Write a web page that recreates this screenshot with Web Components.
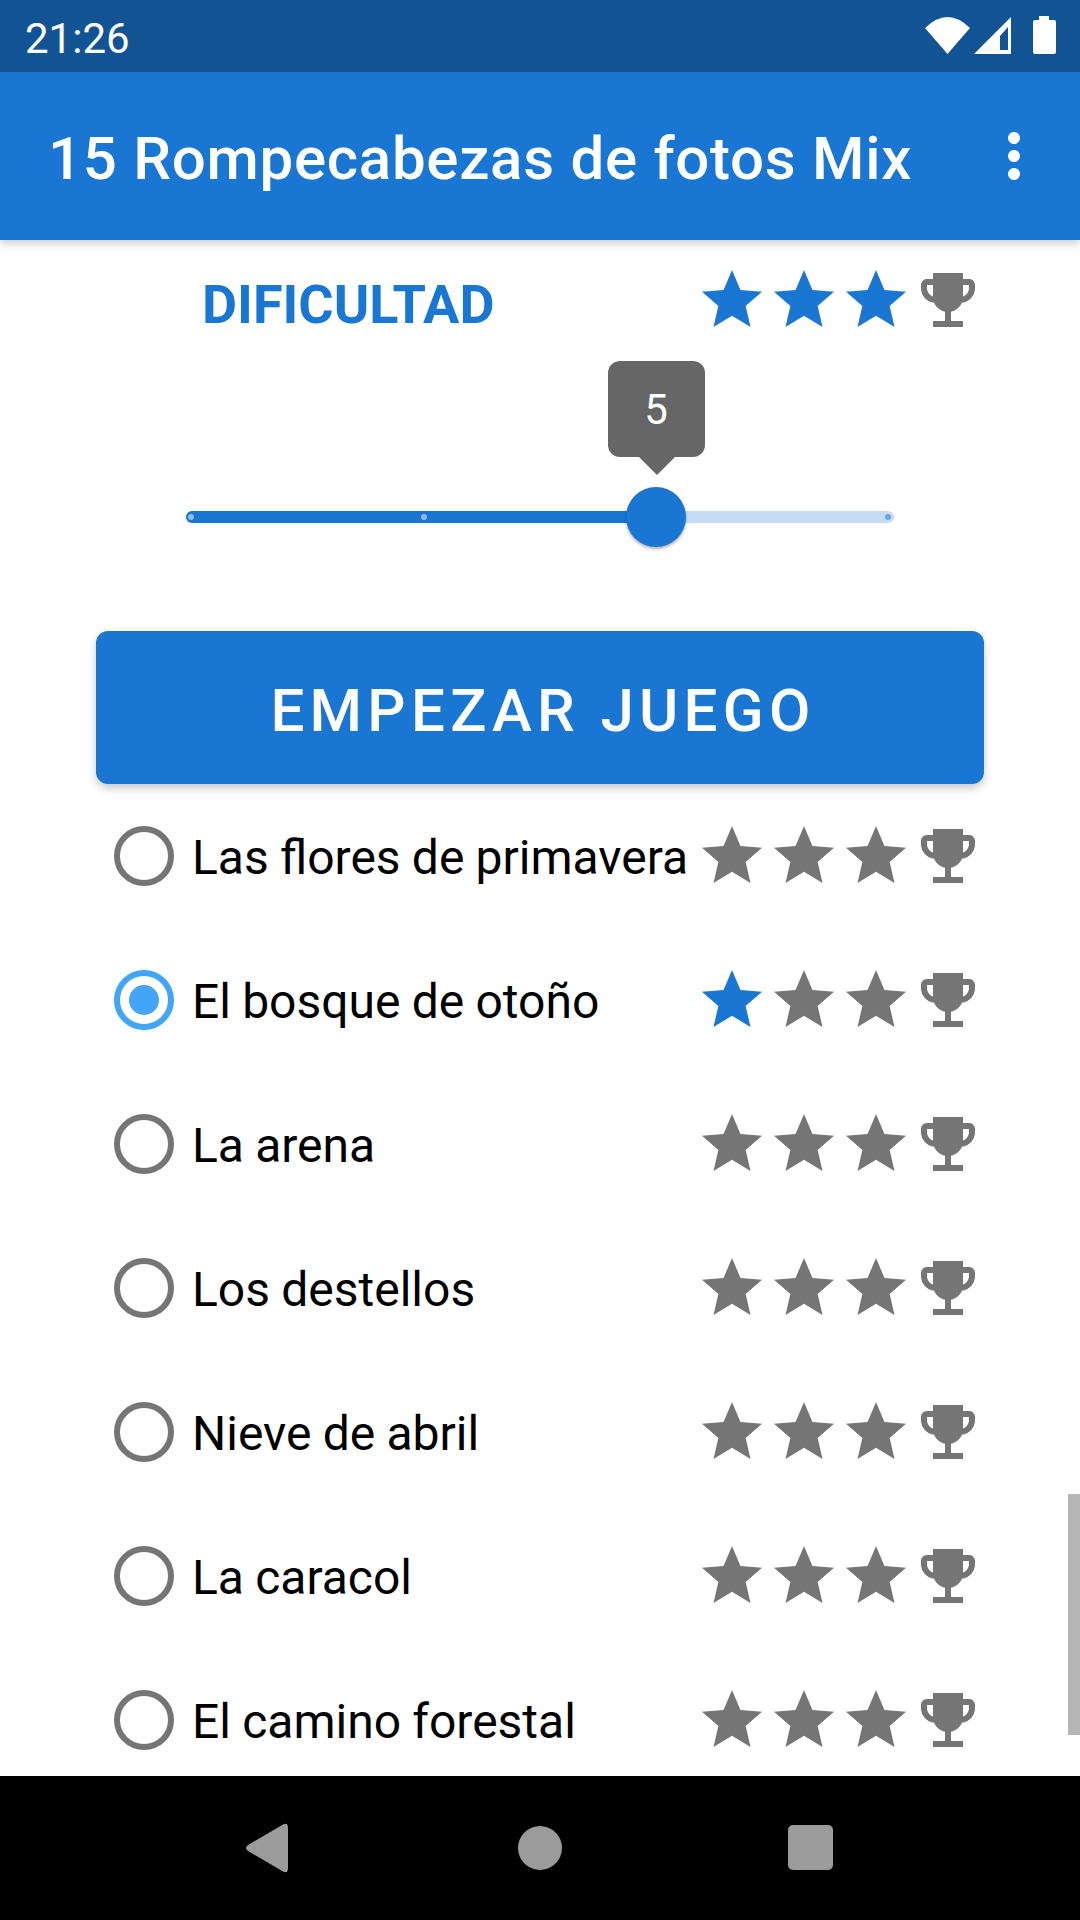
<!DOCTYPE html>
<html lang="es">
<head>
<meta charset="utf-8">
<title>15 Rompecabezas de fotos Mix</title>
<style>
    html, body { margin: 0; padding: 0; background: #FFFFFF; }
    body { font-family: Roboto, "Liberation Sans", sans-serif; }
</style>
</head>
<body>
<app-screen>
    <status-bar slot="top" time="21:26"></status-bar>
    <app-bar slot="top" title="15 Rompecabezas de fotos Mix"></app-bar>

    <difficulty-header filled="3"></difficulty-header>
    <level-slider></level-slider>
    <start-button>EMPEZAR JUEGO</start-button>
    <level-row>Las flores de primavera</level-row>
    <level-row checked filled="1">El bosque de otoño</level-row>
    <level-row>La arena</level-row>
    <level-row>Los destellos</level-row>
    <level-row>Nieve de abril</level-row>
    <level-row>La caracol</level-row>
    <level-row>El camino forestal</level-row>

    <nav-bar slot="bottom"></nav-bar>
</app-screen>

<script>
    const STAR = 'M12 17.27L18.18 21l-1.64-7.03L22 9.24l-7.19-.61L12 2 9.19 8.63 2 9.24l5.46 4.73L5.82 21z';
    const TROPHY = 'M19 5h-2V3H7v2H5c-1.1 0-2 .9-2 2v1c0 2.55 1.92 4.63 4.39 4.94.63 1.5 1.98 2.63 3.61 2.96V19H7v2h10v-2h-4v-3.1c1.63-.33 2.98-1.46 3.61-2.96C19.08 12.63 21 10.55 21 8V7c0-1.1-.9-2-2-2zM5 8V7h2v3.82C5.84 10.4 5 9.3 5 8zm14 0c0 1.3-.84 2.4-2 2.82V7h2v1z';

    class AppScreen extends HTMLElement {
        constructor() {
            super();
            this.attachShadow({ mode: 'open' }).innerHTML = `
                <style>
                    :host { display: flex; flex-direction: column; width: 1080px; height: 1920px; overflow: hidden; background: #FFFFFF; }
                    .top { position: relative; z-index: 2; flex: none; box-shadow: 0 3px 9px rgba(0,0,0,.22); }
                    .content { position: relative; flex: 1; min-height: 0; overflow: hidden; padding: 0 96px; }
                    .scrollbar { position: absolute; right: 0; top: 1254px; width: 12px; height: 241px; background: #B5B5B5; }
                    .bottom { flex: none; position: relative; z-index: 2; }
                </style>
                <div class="top"><slot name="top"></slot></div>
                <div class="content"><slot></slot><div class="scrollbar"></div></div>
                <div class="bottom"><slot name="bottom"></slot></div>`;
        }
    }

    class StatusBar extends HTMLElement {
        connectedCallback() {
            this.attachShadow({ mode: 'open' }).innerHTML = `
                <style>
                    :host { display: flex; align-items: center; height: 72px; padding-left: 25px; box-sizing: border-box; background: #125493; color: #FFFFFF; }
                    .time { margin-top: 5px; font: 400 42px/60px Roboto, sans-serif; }
                    svg { margin-left: auto; display: block; }
                </style>
                <span class="time">${this.getAttribute('time')}</span>
                <svg width="180" height="72" viewBox="900 0 180 72" fill="#FFFFFF">
                    <path d="M925 28Q947.500 6 970 28L947.500 54z"/>
                    <path fill-rule="evenodd" d="M1011 17V54H974zM1008 27L1000 36V50H1008z"/>
                    <path d="M1039 16h10v4h5q2 0 2 2v30q0 2-2 2h-19q-2 0-2-2V22q0-2 2-2h4z" />
                </svg>`;
        }
    }

    class AppBar extends HTMLElement {
        connectedCallback() {
            this.attachShadow({ mode: 'open' }).innerHTML = `
                <style>
                    :host { display: flex; align-items: center; height: 168px; padding: 0 30px 0 48px; box-sizing: border-box; background: #1976D2; color: #FFFFFF; }
                    .title { margin-top: 5px; font: 500 60px/80px Roboto, sans-serif; letter-spacing: 0.72px; white-space: nowrap; }
                    svg { margin-left: auto; display: block; }
                </style>
                <span class="title">${this.getAttribute('title')}</span>
                <svg width="72" height="72" viewBox="0 0 24 24" fill="#FFFFFF">
                    <path d="M12 8c1.100 0 2-.9 2-2s-.9-2-2-2-2 .9-2 2 .9 2 2 2zm0 2c-1.100 0-2 .9-2 2s.9 2 2 2 2-.9 2-2-.9-2-2-2zm0 6c-1.100 0-2 .9-2 2s.9 2 2 2 2-.9 2-2-.9-2-2-2z"/>
                </svg>`;
        }
    }

    class StarRating extends HTMLElement {
        connectedCallback() {
            const filled = Number(this.getAttribute('filled') || 0);
            const stars = [0, 1, 2].map(i =>
                `<svg width="72" height="72" viewBox="0 0 24 24" fill="${i < filled ? '#1976D2' : '#757575'}"><path d="${STAR}"/></svg>`
            ).join('');
            this.attachShadow({ mode: 'open' }).innerHTML = `
                <style>
                    :host { display: flex; flex: none; width: 288px; height: 72px; }
                    svg { display: block; flex: none; }
                </style>
                ${stars}
                <svg width="72" height="72" viewBox="0 0 24 24" fill="#757575"><path d="${TROPHY}"/></svg>`;
        }
    }

    class DifficultyHeader extends HTMLElement {
        connectedCallback() {
            this.attachShadow({ mode: 'open' }).innerHTML = `
                <style>
                    :host { display: flex; align-items: center; height: 72px; padding-top: 24px; }
                    .label { flex: 1; margin-top: 9px; padding-left: 106px; font: 700 54px/60px Roboto, sans-serif; color: #1976D2; }
                </style>
                <span class="label">DIFICULTAD</span>
                <star-rating filled="${this.getAttribute('filled')}"></star-rating>`;
        }
    }

    class LevelSlider extends HTMLElement {
        constructor() {
            super();
            this.attachShadow({ mode: 'open' }).innerHTML = `
                <style>
                    :host { display: block; height: 295px; padding: 175px 90px 0 90px; box-sizing: border-box; }
                    .track { position: relative; height: 12px; border-radius: 6px; background: #C6DBF4; }
                    .active { height: 100%; width: 470px; border-radius: 6px 0 0 6px; background: #1976D2; }
                    .tick { position: absolute; top: 3px; width: 6px; height: 6px; border-radius: 50%; }
                    .thumb { position: absolute; left: 440px; top: -24px; width: 60px; height: 60px; border-radius: 50%; background: #1976D2; box-shadow: 0 2px 3px rgba(0,0,0,.3); }
                    .tip { position: absolute; left: 422px; top: -150px; width: 96px; height: 96px; padding-right: 1px; border-radius: 12px; background: #666666; color: #FFFFFF; font: 400 42px/98px Roboto, sans-serif; text-align: center; }
                    .tip::after { content: ""; position: absolute; left: 31px; top: 96px; border-style: solid; border-width: 18px 18px 0; border-color: #666666 transparent transparent; }
                </style>
                <div class="track">
                    <div class="active"></div>
                    <i class="tick" style="left:2px;background:#8FBCE9"></i>
                    <i class="tick" style="left:235px;background:#8FBCE9"></i>
                    <i class="tick" style="left:699px;background:#6AA5E2"></i>
                    <div class="thumb"></div>
                    <div class="tip">5</div>
                </div>`;
        }
    }

    class StartButton extends HTMLElement {
        constructor() {
            super();
            this.attachShadow({ mode: 'open' }).innerHTML = `
                <style>
                    :host { display: block; height: 153px; padding-left: 6px; border-radius: 12px; background: #1976D2; color: #FFFFFF; box-shadow: 0 4px 9px rgba(0,0,0,.22);
                        font: 500 60px/160px Roboto, sans-serif; letter-spacing: 5.3px; text-align: center; }
                </style>
                <slot></slot>`;
        }
    }

    class LevelRow extends HTMLElement {
        connectedCallback() {
            const checked = this.hasAttribute('checked');
            this.attachShadow({ mode: 'open' }).innerHTML = `
                <style>
                    :host { display: flex; align-items: center; height: 144px; padding-left: 18px; color: #000000; }
                    .radio { flex: none; width: 60px; height: 60px; box-sizing: border-box; display: flex; align-items: center; justify-content: center; border: 6px solid ${checked ? '#42A5F5' : '#757575'}; border-radius: 50%; }
                    .radio i { width: 30px; height: 30px; border-radius: 50%; background: #42A5F5; }
                    /* no letter-spacing here: it would turn off the fl ligature */
                    .text { flex: 1; min-width: 0; margin-top: 4px; padding-left: 18px; font: 400 48px/72px Roboto, sans-serif; word-spacing: -0.7px; white-space: nowrap; }
                </style>
                <div class="radio">${checked ? '<i></i>' : ''}</div>
                <span class="text"><slot></slot></span>
                <star-rating filled="${this.getAttribute('filled') || 0}"></star-rating>`;
        }
    }

    class NavBar extends HTMLElement {
        constructor() {
            super();
            this.attachShadow({ mode: 'open' }).innerHTML = `
                <style>
                    :host { display: block; height: 144px; background: #000000; }
                    svg { display: block; }
                </style>
                <svg width="1080" height="144" viewBox="0 0 1080 144" fill="#9B9B9B">
                    <path d="M283 48.500Q288 46 288 52V92Q288 98 283 95.500L248 75Q244 72 248 69z"/>
                    <circle cx="540" cy="72" r="22"/>
                    <rect x="788" y="49" width="45" height="45" rx="5"/>
                </svg>`;
        }
    }

    customElements.define('star-rating', StarRating);
    customElements.define('app-screen', AppScreen);
    customElements.define('status-bar', StatusBar);
    customElements.define('app-bar', AppBar);
    customElements.define('difficulty-header', DifficultyHeader);
    customElements.define('level-slider', LevelSlider);
    customElements.define('start-button', StartButton);
    customElements.define('level-row', LevelRow);
    customElements.define('nav-bar', NavBar);
</script>
</body>
</html>
